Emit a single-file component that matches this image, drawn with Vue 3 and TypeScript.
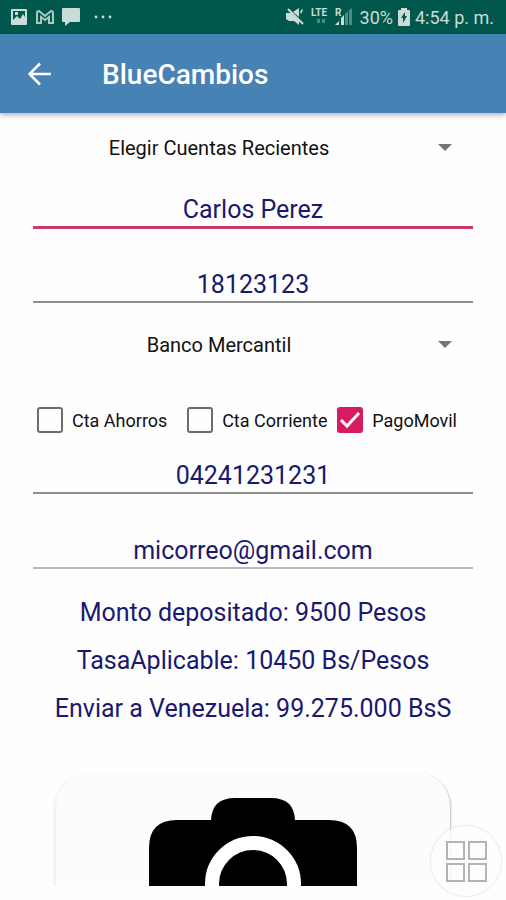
<script setup lang="ts">
import { reactive, ref } from 'vue'

interface AccountType {
  id: string
  label: string
  checked: boolean
}

const recent = ref('Elegir Cuentas Recientes')
const bank = ref('Banco Mercantil')
const form = reactive({
  name: 'Carlos Perez',
  document: '18123123',
  phone: '04241231231',
  email: 'micorreo@gmail.com',
})
const accountTypes = reactive<AccountType[]>([
  { id: 'ahorros', label: 'Cta Ahorros', checked: false },
  { id: 'corriente', label: 'Cta Corriente', checked: false },
  { id: 'movil', label: 'PagoMovil', checked: true },
])
const summary: string[] = [
  'Monto depositado: 9500 Pesos',
  'TasaAplicable: 10450 Bs/Pesos',
  'Enviar a Venezuela: 99.275.000 BsS',
]
</script>

<template>
  <div class="screen">
    <div class="status">
      <div class="status-left">
        <svg class="s-icon" width="18" height="18" viewBox="0 0 18 18">
          <path fill-rule="evenodd" d="M2 1h14a1 1 0 0 1 1 1v14a1 1 0 0 1-1 1H2a1 1 0 0 1-1-1V2a1 1 0 0 1 1-1zM3 3v9l4-4 3 3 3-5 2 3V3zM5 4h3v3H5z" />
        </svg>
        <svg class="s-line" width="18" height="18" viewBox="0 0 18 18">
          <path d="M1 15V5q0-2 2-2l6 5 6-5q2 0 2 2v10h-4V9l-4 3-4-3v6z" />
        </svg>
        <svg class="s-icon" width="18" height="18" viewBox="0 0 18 18">
          <path d="M1 0h16q1 0 1 1v12q0 1-1 1H8l-5 4v-4H1q-1 0-1-1V1q0-1 1-1z" />
        </svg>
        <svg class="s-icon dots" width="20" height="18" viewBox="0 0 20 18">
          <circle cx="3" cy="9" r="1.4" /><circle cx="10" cy="9" r="1.4" /><circle cx="17" cy="9" r="1.4" />
        </svg>
      </div>
      <div class="status-right">
        <svg class="s-icon mute" width="18" height="18" viewBox="0 0 18 18">
          <path d="M0 5h5l8 8v4l-5-4H3L0 11zM7 4l6-4v9z" />
          <path class="slash" d="M2 1l15 15" />
          <path d="M14 4l2-3 1 1-2 4z" />
        </svg>
        <svg class="s-icon" width="19" height="20" viewBox="0 0 19 20">
          <text class="tiny" x="0" y="9">LTE</text>
          <path class="faint" d="M6 12h3v4H6zM11 12h3v4h-3z" />
        </svg>
        <svg class="s-icon" width="18" height="20" viewBox="0 0 18 20">
          <text class="tiny" x="0" y="9">R</text>
          <path d="M0 18l4-4v4zM6 11l3-3v10H6z" />
          <path class="faint" d="M10 7l3-3v14h-3zM14 3l3-2v17h-3z" />
        </svg>
        <span class="percent">30%</span>
        <svg class="s-icon" width="12" height="18" viewBox="0 0 12 18">
          <path fill-rule="evenodd" d="M3 0h6v2h2q1 0 1 1v14q0 1-1 1H1q-1 0-1-1V3q0-1 1-1h2zM7 4l-4 6h2v5l4-7H7z" />
        </svg>
        <span>4:54 p. m.</span>
      </div>
    </div>

    <header class="appbar">
      <button class="back" type="button" aria-label="Atrás">
        <svg width="24" height="24" viewBox="0 0 24 24">
          <path d="M23 12H2M12 1.500L1.500 12 12 22.500" />
        </svg>
      </button>
      <h1>BlueCambios</h1>
    </header>

    <main>
      <div class="spinner recent">
        <select v-model="recent" aria-label="Cuentas recientes">
          <option>Elegir Cuentas Recientes</option>
        </select>
        <svg class="caret" width="14" height="7" viewBox="0 0 14 7"><path d="M0 0h14L7 7z" /></svg>
      </div>

      <input v-model="form.name" class="field active" type="text" aria-label="Nombre" />
      <input v-model="form.document" class="field document" type="text" aria-label="Documento" />

      <div class="spinner bank">
        <select v-model="bank" aria-label="Banco">
          <option>Banco Mercantil</option>
        </select>
        <svg class="caret" width="14" height="7" viewBox="0 0 14 7"><path d="M0 0h14L7 7z" /></svg>
      </div>

      <div class="checks">
        <label v-for="t in accountTypes" :key="t.id" class="check" :for="t.id">
          <span class="tick">
            <input :id="t.id" v-model="t.checked" type="checkbox" />
            <svg v-if="t.checked" width="26" height="26" viewBox="0 0 26 26"><path d="M4 13l6 6L22 6" /></svg>
          </span>
          <span>{{ t.label }}</span>
        </label>
      </div>

      <input v-model="form.phone" class="field" type="tel" aria-label="Teléfono" />
      <input v-model="form.email" class="field email" type="email" aria-label="Correo" />

      <div class="summary">
        <p v-for="line in summary" :key="line">{{ line }}</p>
      </div>

      <div class="photo-clip">
        <button class="photo" type="button" aria-label="Tomar foto">
          <svg width="208" height="176" viewBox="0 0 208 176">
            <path d="M0 50Q0 22 28 22H62Q63 0 86 0H122Q145 0 146 22H180Q208 22 208 50V150Q208 176 182 176H26Q0 176 0 150z" />
            <circle cx="104" cy="86" r="41" />
          </svg>
        </button>
      </div>
    </main>

    <button class="assist" type="button" aria-label="Menú de asistencia">
      <svg width="42" height="42" viewBox="0 0 42 42">
        <path d="M2 2h17v17H2zM24 2h17v17H24zM2 24h17v17H2zM24 24h17v17H24z" />
      </svg>
    </button>
  </div>
</template>

<style>
body {
  background: #fefefe;
}
</style>

<style scoped>
.screen {
  font-family: Roboto, 'Liberation Sans', sans-serif;
  color: #111;
  min-height: 100vh;
  box-sizing: border-box;
  padding-bottom: 14px;
}
button,
input,
select {
  font: inherit;
  margin: 0;
  outline: none;
}
.status {
  display: flex;
  justify-content: space-between;
  align-items: center;
  height: 34px;
  padding: 0 12px 0 10px;
  background: #00574b;
  color: #c9dcd8;
  font-size: 18px;
}
.status-left,
.status-right {
  display: flex;
  align-items: center;
}
.status-left {
  gap: 8px;
}
.status-right {
  gap: 5px;
}
.mute {
  margin-right: 2px;
}
.s-icon {
  fill: #c9dcd8;
}
.s-line {
  fill: none;
  stroke: #a9c9c2;
  stroke-width: 2;
}
.dots {
  margin-left: 5px;
}
.slash {
  fill: none;
  stroke: #c9dcd8;
  stroke-width: 2;
}
.faint {
  fill: #4d8a80;
}
.tiny {
  font-size: 10px;
  font-weight: 700;
}
.percent {
  margin-left: 2px;
}
.appbar {
  position: relative;
  display: flex;
  align-items: center;
  gap: 50px;
  height: 79px;
  padding: 0 28px;
  box-sizing: border-box;
  background: #4682b4;
  box-shadow: 0 2px 5px rgba(0, 0, 0, 0.3);
  color: #fff;
}
.back {
  display: flex;
  padding: 0;
  border: 0;
  background: none;
}
.back path {
  fill: none;
  stroke: #fff;
  stroke-width: 2.6;
}
h1 {
  margin: 0;
  padding-top: 2px;
  font-size: 28px;
  line-height: 32px;
  font-weight: 500;
}
main {
  display: flex;
  flex-direction: column;
  padding: 10px 33px 0;
}
.spinner {
  display: grid;
  align-items: center;
}
.spinner select {
  grid-area: 1 / 1;
  height: 48px;
  width: 100%;
  padding: 1px 68px 0 0;
  border: 0;
  background: none;
  appearance: none;
  color: #111;
  font-size: 20px;
  text-align: center;
  text-align-last: center;
}
.caret {
  grid-area: 1 / 1;
  justify-self: end;
  margin-right: 21px;
  fill: #757575;
  pointer-events: none;
}
.recent {
  margin-bottom: 10px;
}
.bank {
  margin: 17px 0 28px;
}
.field {
  width: 100%;
  height: 48px;
  box-sizing: border-box;
  padding: 12px 0 0;
  border: 0;
  border-bottom: 2px solid #8f8f8f;
  border-radius: 0;
  background: none;
  color: #191970;
  font-size: 25px;
  text-align: center;
}
.active {
  border-bottom: 3px solid #cb3a6b;
}
.document {
  margin-top: 26px;
}
.email {
  margin-top: 27px;
  border-bottom-color: #bababa;
}
.checks {
  display: grid;
  grid-template-columns: 1fr 1fr auto;
  height: 48px;
  margin-bottom: 2px;
  padding: 0 16px 0 4px;
  font-size: 18px;
}
.check {
  display: flex;
  align-items: center;
  gap: 9px;
}
.tick {
  display: grid;
}
.tick input {
  grid-area: 1 / 1;
  width: 26px;
  height: 26px;
  box-sizing: border-box;
  border: 2px solid #6e6e6e;
  border-radius: 3px;
  appearance: none;
}
.tick input:checked {
  border-color: #d81b60;
  background: #d81b60;
}
.tick svg {
  grid-area: 1 / 1;
  fill: none;
  stroke: #fff;
  stroke-width: 3;
  pointer-events: none;
}
.summary {
  margin-top: 20px;
  color: #191970;
  font-size: 25px;
  line-height: 48px;
  text-align: center;
}
.summary p {
  margin: 0;
}
.photo-clip {
  box-sizing: border-box;
  height: 118px;
  margin-top: 35px;
  padding: 4px 23px 0;
  overflow: hidden;
}
.photo {
  display: block;
  width: 100%;
  padding: 26px 0;
  border: 0;
  border-radius: 34px;
  background: #fcfcfc;
  box-shadow:
    1px 1px 2px rgba(0, 0, 0, 0.25),
    -3px 2px 2px rgba(0, 0, 0, 0.04);
}
.photo svg {
  display: block;
  margin: 0 auto;
}
.photo circle {
  fill: none;
  stroke: #fff;
  stroke-width: 14;
}
.assist {
  position: fixed;
  right: 4px;
  bottom: 3px;
  display: grid;
  place-items: center;
  width: 72px;
  height: 72px;
  padding: 0;
  border: 1px solid #ececec;
  border-radius: 50%;
  background: rgba(253, 253, 253, 0.85);
  box-shadow: 0 0 2px rgba(0, 0, 0, 0.08);
}
.assist path {
  fill: none;
  stroke: #b4b4b4;
  stroke-width: 2;
}
</style>
